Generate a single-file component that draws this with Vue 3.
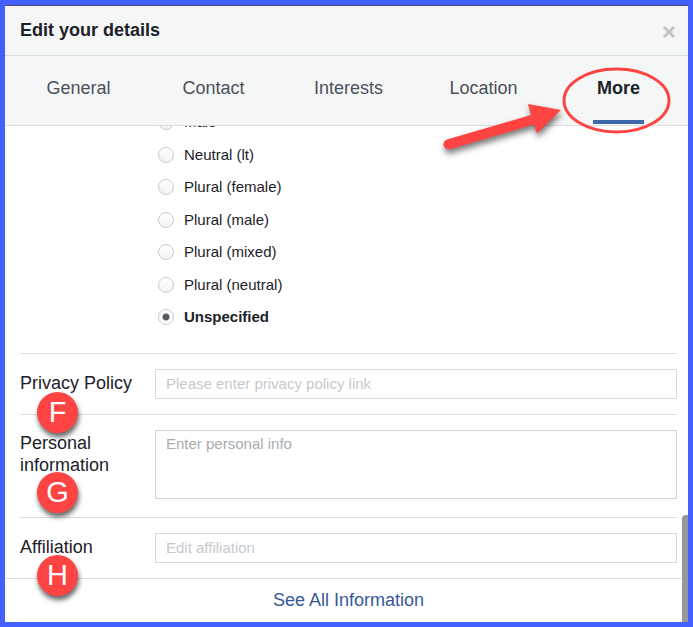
<script setup>
import { ref } from 'vue';

const tabs = ['General', 'Contact', 'Interests', 'Location', 'More'];
const activeTab = ref('More');

const genders = [
    'Male',
    'Neutral (lt)',
    'Plural (female)',
    'Plural (male)',
    'Plural (mixed)',
    'Plural (neutral)',
    'Unspecified',
];
const gender = ref('Unspecified');

const privacyPolicy = ref('');
const personalInfo = ref('');
const affiliation = ref('');
</script>

<template>
    <div class="Dialog">
        <header class="Header">
            <h1>Edit your details</h1>
            <button type="button" class="Close" aria-label="Close">
                <svg viewBox="0 0 14 14" width="14" height="14">
                    <path d="M2 2 L12 12 M12 2 L2 12" />
                </svg>
            </button>
        </header>
        <nav class="Tabs">
            <button v-for="tab in tabs" :key="tab" type="button" class="Tab" :class="{ Active: tab === activeTab }"
                @click="activeTab = tab">
                <span>{{ tab }}</span>
            </button>
        </nav>
        <main class="Body">
            <div class="Genders">
                <label v-for="item in genders" :key="item" class="Gender" :class="{ Checked: item === gender }">
                    <input v-model="gender" type="radio" name="gender" :value="item">
                    <span>{{ item }}</span>
                </label>
            </div>
            <div class="Field">
                <label for="privacy">Privacy Policy</label>
                <input id="privacy" v-model="privacyPolicy" type="text" placeholder="Please enter privacy policy link">
            </div>
            <div class="Field Tall">
                <label for="personal">Personal information</label>
                <textarea id="personal" v-model="personalInfo" placeholder="Enter personal info"></textarea>
            </div>
            <div class="Field">
                <label for="affiliation">Affiliation</label>
                <input id="affiliation" v-model="affiliation" type="text" placeholder="Edit affiliation">
            </div>
        </main>
        <footer class="Footer">
            <a href="#">See All Information</a>
        </footer>

        <div class="Scrollbar"></div>
        <svg class="Pointer" viewBox="0 0 260 160" width="260" height="160">
            <path class="Arrow"
                d="M14 139.500 L98 115 L95 104 L128 110 L104 133.500 L101 124.500 L17 149.200 A5 5 0 0 1 14 139.500 Z" />
            <ellipse cx="183.500" cy="100.500" rx="52.500" ry="31.500" />
        </svg>
        <span class="Badge F">F</span>
        <span class="Badge G">G</span>
        <span class="Badge H">H</span>
    </div>
</template>

<style>
body {
    margin: 0;
}
</style>

<style scoped>
.Dialog {
    position: relative;
    display: flex;
    flex-direction: column;
    box-sizing: border-box;
    height: 100vh;
    border: 5px solid #4260ff;
    overflow: hidden;

    background: #fff;
    color: #1d2129;
    font-family: "Liberation Sans", Arial, sans-serif;
    font-size: 18px;
    line-height: 22px;
}

.Header {
    display: flex;
    align-items: center;
    justify-content: space-between;
    flex: none;
    box-sizing: border-box;
    height: 51px;
    padding: 0 12px 2px 15px;
    border-top: 1px solid #4a4a6a;
    border-bottom: 1px solid #dadddf;
    background: #f5f7f7;
}

.Header h1 {
    margin: 0;
    font-size: 18px;
    font-weight: bold;
}

.Close {
    display: flex;
    padding: 4px 0 0;
    border: 0;
    background: none;
    cursor: pointer;
}

.Close path {
    fill: none;
    stroke: #bfc1c5;
    stroke-width: 3;
}

.Tabs {
    display: flex;
    flex: none;
    height: 69px;
    padding: 0 2px 0 6px;
    border-bottom: 1px solid #dadddf;
    background: #f5f7f7;
}

.Tab {
    display: flex;
    flex: 1;
    justify-content: center;
    padding: 0;
    border: 0;
    background: none;
    color: #4b4f5c;
    font: inherit;
    cursor: pointer;
}

.Tab span {
    box-sizing: border-box;
    height: 68px;
    padding: 21px 4px 0;
}

.Tab.Active {
    color: #1d2129;
    font-weight: bold;
}

.Tab.Active span {
    border-bottom: 4px solid #3f68ab;
}

.Body {
    display: flex;
    flex: 1;
    flex-direction: column;
    justify-content: flex-end;
    min-height: 0;
    padding: 0 11px 0 15px;
    overflow: hidden;
}

.Genders {
    display: flex;
    flex: none;
    flex-direction: column;
    justify-content: space-between;
    height: 215px;
    padding: 0 0 26px 138px;
}

.Gender {
    display: flex;
    align-items: center;
    align-self: flex-start;
    gap: 10px;
    font-size: 15px;
    line-height: 20px;
}

.Gender.Checked {
    font-weight: bold;
}

.Gender input {
    appearance: none;
    width: 16px;
    height: 16px;
    margin: 0;
    border: 1px solid #c9cbce;
    border-radius: 50%;
    background: linear-gradient(#fff, #f3f3f3);
}

.Gender input:checked {
    background: radial-gradient(circle, #565b68 3px, #fff 4px);
}

.Field {
    display: flex;
    align-items: flex-start;
    flex: none;
    padding: 15px 0;
    border-top: 1px solid #dcdee1;
}

.Field label {
    flex: none;
    width: 120px;
    margin-right: 15px;
    padding-top: 3px;
}

.Field.Tall {
    padding-bottom: 18px;
}

.Field.Tall label {
    padding-top: 2px;
}

.Field input,
.Field textarea {
    flex: 1;
    box-sizing: border-box;
    min-width: 0;
    height: 30px;
    margin: 0;
    padding: 0 10px 2px;
    border: 1px solid #d5d9de;
    border-radius: 0;
    background: #fff;
    color: #1d2129;
    font: inherit;
    font-size: 15px;
    line-height: 20px;
}

.Field textarea {
    height: 69px;
    padding: 3px 10px;
    border-color: #ccd3da;
    resize: none;
}

.Field input::placeholder {
    color: #c6c9ce;
}

.Field textarea::placeholder {
    color: #a9acb1;
}

.Footer {
    flex: none;
    box-sizing: border-box;
    height: 44px;
    padding: 10px 0 0 4px;
    border-top: 1px solid #dcdee1;
    text-align: center;
}

.Footer a {
    color: #365899;
    text-decoration: none;
}

.Scrollbar {
    position: absolute;
    right: 0;
    bottom: 0;
    width: 6px;
    height: 107px;
    border-radius: 4px 0 0;
    background: #979797;
}

/* callouts drawn over the dialog */
.Pointer {
    position: absolute;
    top: -5px;
    right: -5px;
    pointer-events: none;
}

.Pointer .Arrow {
    fill: #fd4442;
    filter: drop-shadow(1px 4px 3px #0008);
}

.Pointer ellipse {
    fill: none;
    stroke: #fd4442;
    stroke-width: 3;
}

.Badge {
    position: absolute;
    left: 32px;
    width: 41px;
    height: 41px;
    border-radius: 50%;
    box-shadow: 1px 4px 5px #0009;

    background: #fd4442;
    color: #fff;
    font-size: 29px;
    line-height: 41px;
    text-align: center;
}

.Badge.F {
    bottom: 189px;
}

.Badge.G {
    bottom: 109px;
}

.Badge.H {
    bottom: 26px;
}
</style>
